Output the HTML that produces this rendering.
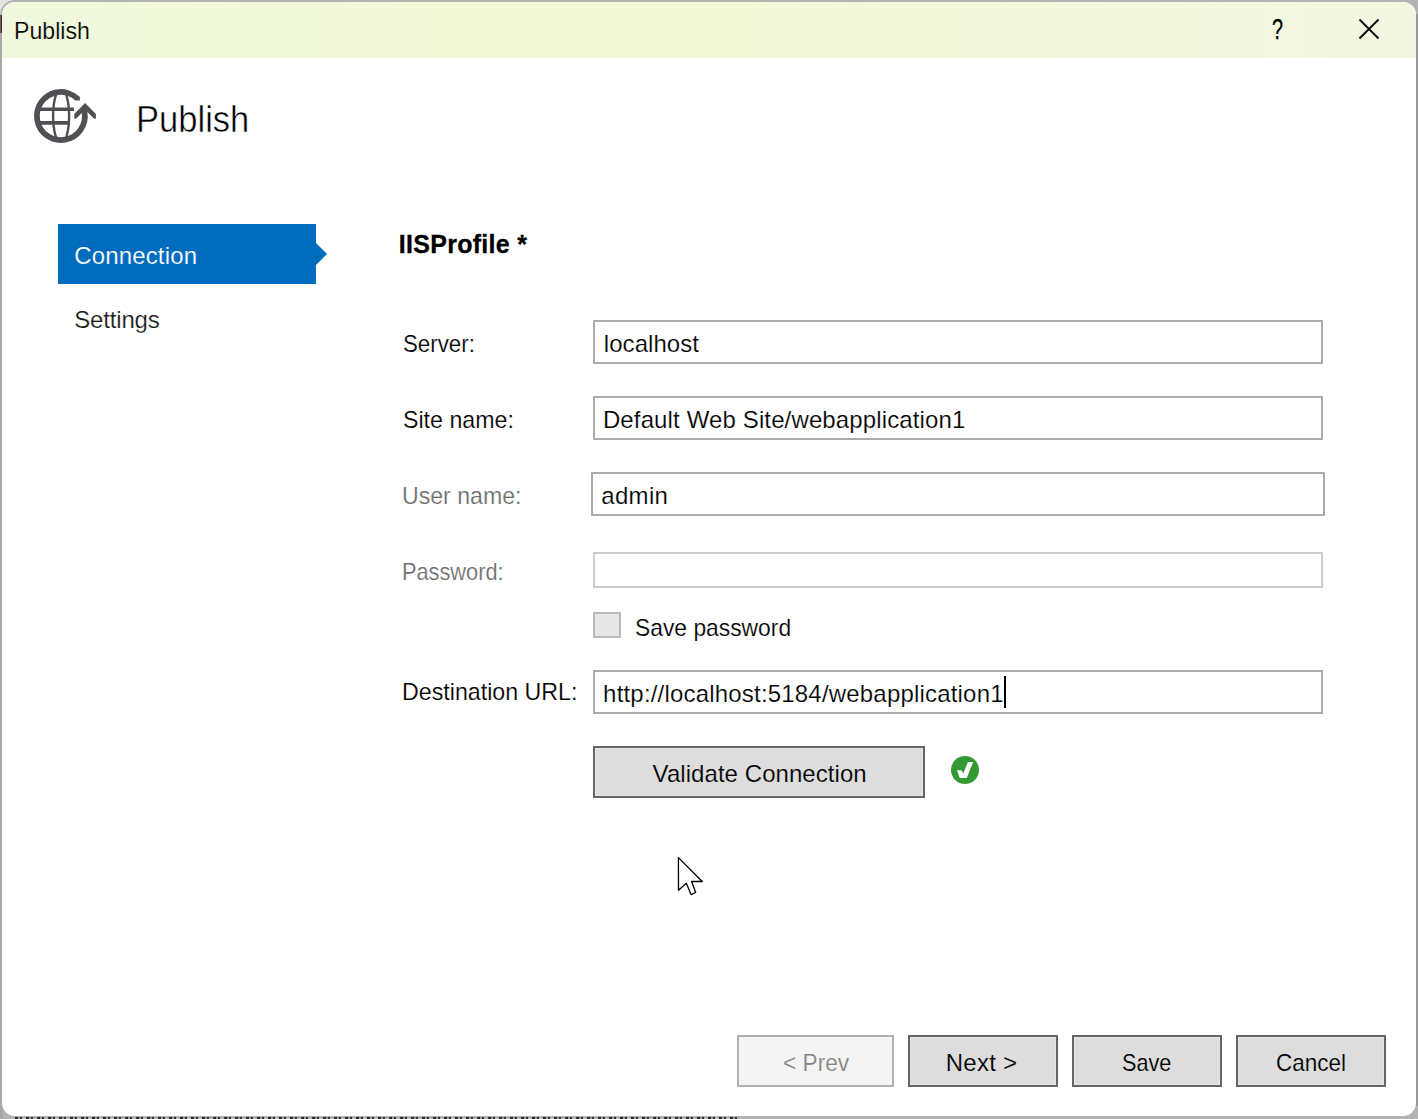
<!DOCTYPE html>
<html lang="en">
<head>
<meta charset="utf-8">
<title>Publish</title>
<style>
html,body{margin:0;padding:0;}
body{width:1418px;height:1119px;overflow:hidden;background:#b2b2b3;position:relative;font-family:"Liberation Sans",sans-serif;}
.win{position:absolute;left:2px;top:1.75px;width:1413.9px;height:1114.6px;background:#fff;border-radius:13px;overflow:hidden;}
.edge{position:absolute;}
.titlebar{position:absolute;left:0;top:0;width:100%;height:56.25px;background:linear-gradient(90deg,#f0f8de 0%,#f2f8d8 30%,#f3f8d8 50%,#f3f7de 75%,#f4f6e2 100%);}
.t{position:absolute;white-space:pre;line-height:1;}
.box{position:absolute;box-sizing:border-box;border:2px solid #ababab;background:#fff;}
.btn{position:absolute;box-sizing:border-box;border:2px solid #666666;background:#dddddd;box-shadow:inset 0 0 0 1px #e6e6e6;}
.nav{position:absolute;left:58px;top:224px;width:258px;height:60px;background:#006cbe;}
.navarrow{position:absolute;left:258px;top:19.4px;width:0;height:0;border-top:11px solid transparent;border-bottom:11px solid transparent;border-left:11px solid #006cbe;}
svg{position:absolute;overflow:visible;}
</style>
</head>
<body>
<div class="edge" style="left:0;top:0;width:16px;height:15px;background:#e2e4e2;"></div>
<div class="edge" style="left:0.2px;top:0;width:60px;height:60px;border-radius:15px 0 0 0;background:#b2b2b3;"></div>
<div class="edge" style="left:0;top:15px;width:2px;height:18px;background:linear-gradient(90deg,#8b5a3c 0 65%,#2c2f55 65%);"></div>
<div class="edge" style="left:0;top:33px;width:3px;height:1086px;background:#a9a9a9;"></div>
<div class="edge" style="left:1414px;top:14px;width:4px;height:1092px;background:#99999c;"></div>
<div class="edge" style="left:15px;top:1117.3px;width:725px;height:2px;background:repeating-linear-gradient(90deg,#2a2a2a 0 3px,#9a9a9a 3px 5px,#3a3026 5px 7px,#b0b0b0 7px 11px);"></div>
<div class="win"><div class="titlebar"></div></div>

<header>
<span class="t" style="left:14.4px;top:18.9px;font-size:24px;color:#000000;transform-origin:0 0;-webkit-text-stroke:0.18px #f1f8dc;transform:scaleX(0.9633);">Publish</span>
<span class="t" style="left:136.3px;top:100.9px;font-size:37px;color:#000000;transform-origin:0 0;-webkit-text-stroke:0.5px #fff;transform:scaleX(0.9336);">Publish</span>
<span class="t" style="left:1271.8px;top:14.2px;font-size:29.5px;color:#000000;transform-origin:0 0;transform:scaleX(0.67);-webkit-text-stroke:0.35px #000;">?</span>
</header>
<nav>
<div class="nav" style="left:58px;top:224px;width:258px;height:60px;"><span class="t" style="left:16.3px;top:19.9px;font-size:24px;color:#ffffff;letter-spacing:0.14px;transform-origin:0 0;-webkit-text-stroke:0.18px #006cbe;">Connection</span><div class="navarrow"></div></div>
<span class="t" style="left:74.3px;top:307.5px;font-size:24px;color:#1a1a1a;letter-spacing:-0.18px;transform-origin:0 0;-webkit-text-stroke:0.18px #fff;">Settings</span>
</nav>
<main>
<span class="t" style="left:398.7px;top:231.7px;font-size:25px;color:#000000;letter-spacing:0.3px;transform-origin:0 0;-webkit-text-stroke:0.3px #000;font-weight:700;">IISProfile *</span>
<span class="t" style="left:403.0px;top:332.0px;font-size:24px;color:#000000;transform-origin:0 0;-webkit-text-stroke:0.18px #fff;transform:scaleX(0.9284);">Server:</span>
<span class="t" style="left:402.7px;top:407.7px;font-size:24px;color:#000000;transform-origin:0 0;-webkit-text-stroke:0.18px #fff;transform:scaleX(0.9661);">Site name:</span>
<span class="t" style="left:402.0px;top:483.8px;font-size:24px;color:#6d6d6d;transform-origin:0 0;-webkit-text-stroke:0.18px #fff;transform:scaleX(0.9625);">User name:</span>
<span class="t" style="left:402.2px;top:559.8px;font-size:24px;color:#6d6d6d;transform-origin:0 0;-webkit-text-stroke:0.18px #fff;transform:scaleX(0.9065);">Password:</span>
<span class="t" style="left:634.9px;top:615.5px;font-size:24px;color:#000000;transform-origin:0 0;-webkit-text-stroke:0.18px #fff;transform:scaleX(0.9512);">Save password</span>
<span class="t" style="left:402.2px;top:680.0px;font-size:24px;color:#000000;transform-origin:0 0;-webkit-text-stroke:0.18px #fff;transform:scaleX(0.9672);">Destination URL:</span>
<div class="box" style="left:593px;top:320px;width:730px;height:44px;"><span class="t" style="left:8.8px;top:10.0px;font-size:24px;color:#000000;letter-spacing:0.06px;transform-origin:0 0;-webkit-text-stroke:0.18px #fff;">localhost</span></div>
<div class="box" style="left:593px;top:396px;width:730px;height:44px;"><span class="t" style="left:7.9px;top:9.7px;font-size:24px;color:#000000;letter-spacing:0.13px;transform-origin:0 0;-webkit-text-stroke:0.18px #fff;">Default Web Site/webapplication1</span></div>
<div class="box" style="left:591px;top:472px;width:734px;height:44px;"><span class="t" style="left:8.3px;top:9.8px;font-size:24px;color:#000000;letter-spacing:0.3px;transform-origin:0 0;-webkit-text-stroke:0.18px #fff;">admin</span></div>
<div class="box" style="left:593px;top:552px;width:730px;height:36px;border-color:#cbccd0;"></div>
<div class="box" style="left:593px;top:612px;width:28px;height:26px;border-color:#bababa;background:#e6e6e6;"></div>
<div class="box" style="left:593px;top:670px;width:730px;height:44px;"><span class="t" style="left:8.1px;top:10.0px;font-size:24px;color:#000000;letter-spacing:0.19px;transform-origin:0 0;-webkit-text-stroke:0.18px #fff;">http://localhost:5184/webapplication1</span></div>
<div class="btn" style="left:593px;top:746px;width:332px;height:52px;"><span class="t" style="left:57.6px;top:14.0px;font-size:24px;color:#000000;letter-spacing:0.06px;transform-origin:0 0;-webkit-text-stroke:0.18px #dddddd;">Validate Connection</span></div>
</main>
<footer>
<div class="btn" style="left:737px;top:1035px;width:157px;height:52px;border-color:#adb2b5;background:#f4f4f4;box-shadow:none;"><span class="t" style="left:44.0px;top:13.8px;font-size:24px;color:#838383;transform-origin:0 0;-webkit-text-stroke:0.18px #f4f4f4;transform:scaleX(0.9449);">&lt; Prev</span></div>
<div class="btn" style="left:908px;top:1035px;width:150px;height:52px;"><span class="t" style="left:35.7px;top:13.8px;font-size:24px;color:#000000;letter-spacing:0.26px;transform-origin:0 0;-webkit-text-stroke:0.18px #dddddd;">Next &gt;</span></div>
<div class="btn" style="left:1072px;top:1035px;width:150px;height:52px;"><span class="t" style="left:48.1px;top:13.8px;font-size:24px;color:#000000;transform-origin:0 0;-webkit-text-stroke:0.18px #dddddd;transform:scaleX(0.9019);">Save</span></div>
<div class="btn" style="left:1236px;top:1035px;width:150px;height:52px;"><span class="t" style="left:38.2px;top:13.8px;font-size:24px;color:#000000;transform-origin:0 0;-webkit-text-stroke:0.18px #dddddd;transform:scaleX(0.9375);">Cancel</span></div>
</footer>
<!-- close X -->
<svg style="left:0;top:0" width="1418" height="1119" viewBox="0 0 1418 1119">
  <path d="M1359.5 19.5 L1378.5 38.5 M1378.5 19.5 L1359.5 38.5" stroke="#000" stroke-width="1.8" fill="none"/>
  <!-- globe publish icon -->
  <!--ICON--><clipPath id="gc"><circle cx="60.9" cy="116.0" r="24.0"/></clipPath>
  <clipPath id="ac"><polygon points="0,0 79.9,0 79.9,100.4 70,100.4 70,200 0,200"/></clipPath>
  <g fill="none" stroke="#4f5053">
    <g clip-path="url(#gc)">
      <ellipse cx="61.1" cy="116.0" rx="8" ry="27.5" stroke-width="2.4"/>
      <path d="M34 109.2 H74 M34 122.9 H69.5" stroke-width="3.6"/>
    </g>
    <path d="M81.68 104.00 A24.0 24.0 0 0 0 50.76 94.25" stroke-width="5.7" clip-path="url(#ac)"/>
    <path d="M56.73 92.36 A24.0 24.0 0 1 0 84.54 111.83 L84.9 108" stroke-width="5.7"/>
    <polygon points="85.1,103.1 95.9,113.9 95.9,118.8 94.2,118.8 87.6,112.2 82.6,112.2 76,118.8 74.3,118.8 74.3,113.9" fill="#4f5053" stroke="none"/>
  </g><!--/ICON-->
  <!-- check -->
  <circle cx="965" cy="770" r="14" fill="#339933"/>
  <polygon points="957,770.2 961.5,770.2 963.2,773.6 967.9,762 973.1,762 966.8,778.1 959.7,778.1" fill="#fff"/>
  <!-- cursor -->
  <polygon points="678.4,857.6 702.2,881.5 691.6,881.5 695.7,892.5 691.1,894.6 686.3,883.3 678.5,890.3" fill="#fff" stroke="#000" stroke-width="1.3" stroke-linejoin="round"/>
  <!-- caret -->
  <rect x="1004" y="676" width="2" height="32" fill="#000"/>
</svg>


</body>
</html>
